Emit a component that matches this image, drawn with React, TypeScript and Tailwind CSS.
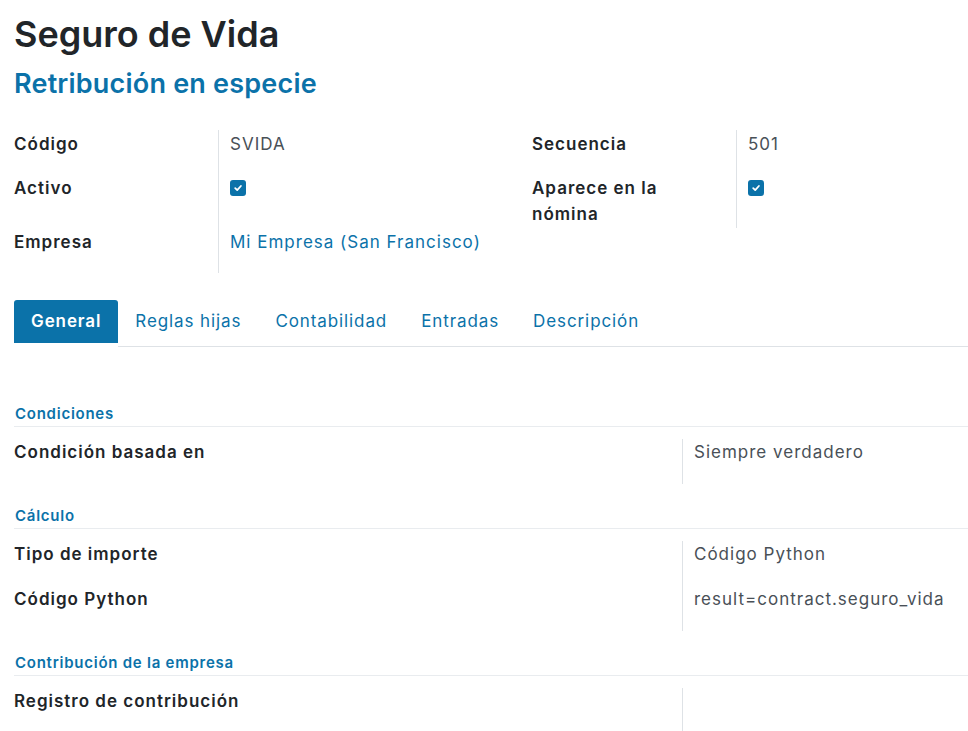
import React from "react";

const BLUE = "text-[#0b72a9]";

const Check = () => (
  <span className="inline-flex h-[16px] w-[16px] items-center justify-center rounded-[3px] bg-[#0b72a9]">
    <svg width="10" height="10" viewBox="0 0 10 10" fill="none">
      <path d="M2.2 5.2 4.2 7.1 7.9 3" stroke="white" strokeWidth="1.8" strokeLinecap="round" strokeLinejoin="round" />
    </svg>
  </span>
);

type Row = { label: React.ReactNode; value?: React.ReactNode; h: string };

const FieldGroup = ({ rows }: { rows: Row[] }) => (
  <div className="flex w-[518px] shrink-0">
    <div className="w-[204px] shrink-0">
      {rows.map((r, i) => (
        <div key={i} className={`${r.h} pt-[1px] text-[17px] font-semibold leading-[26px] tracking-[1px] text-[#212529]`}>
          {r.label}
        </div>
      ))}
    </div>
    <div className="flex-1 border-l border-[#dee2e6] pl-[11px]">
      {rows.map((r, i) => (
        <div key={i} className={`${r.h} pt-[1px] text-[17px] leading-[26px] tracking-[1px] text-[#495057]`}>
          {r.value}
        </div>
      ))}
    </div>
  </div>
);

const Section = ({ title, rows, first }: { title: string; rows: { label: string; value?: string }[]; first?: boolean }) => (
  <div className={first ? "mt-[57px]" : "mt-[22px]"}>
    <div className={`border-b border-[#e9ecef] pb-[2px] pl-[1px] text-[15px] font-semibold leading-[20px] tracking-[0.75px] ${BLUE}`}>
      {title}
    </div>
    <div className="mt-[12px] flex">
      <div className="w-[668px] shrink-0">
        {rows.map((r) => (
          <div key={r.label} className="h-[45px] text-[17px] font-semibold leading-[26px] tracking-[1px] text-[#212529]">
            {r.label}
          </div>
        ))}
      </div>
      <div className="flex-1 border-l border-[#dee2e6] pl-[11px]">
        {rows.map((r) => (
          <div key={r.label} className="h-[45px] text-[17px] leading-[26px] tracking-[1px] text-[#495057]">
            {r.value}
          </div>
        ))}
      </div>
    </div>
  </div>
);

const Box = () => (
  <span className="flex h-[26px] items-center">
    <Check />
  </span>
);

export default function App() {
  const tabs = ["Reglas hijas", "Contabilidad", "Entradas", "Descripción"];
  return (
    <div className="min-h-[731px] overflow-hidden bg-white pl-[14px] font-['Inter','Noto_Sans',sans-serif]">
      <h1 className="pt-[10px] text-[36px] font-semibold leading-[48px] text-[#212529]">Seguro de Vida</h1>
      <h2 className={`mt-[9px] text-[27px] font-semibold leading-[34px] tracking-[0.2px] ${BLUE}`}>Retribución en especie</h2>

      <div className="mt-[29px] flex items-start">
        <FieldGroup
          rows={[
            { label: "Código", value: "SVIDA", h: "h-[44px]" },
            { label: "Activo", value: <Box />, h: "h-[54px]" },
            { label: "Empresa", value: <span className={BLUE}>Mi Empresa (San Francisco)</span>, h: "h-[45px]" },
          ]}
        />
        <FieldGroup
          rows={[
            { label: "Secuencia", value: "501", h: "h-[44px]" },
            { label: <>Aparece en la<br />nómina</>, value: <Box />, h: "h-[54px]" },
          ]}
        />
      </div>

      <div className="mt-[27px] flex items-start">
        <div className="flex h-[43px] items-center rounded-t-[3px] bg-[#0b72a9] px-[17px] text-[17px] font-semibold tracking-[0.9px] text-white">
          General
        </div>
        <div className="flex h-[47px] flex-1 items-start border-b border-[#dee2e6]">
          {tabs.map((t) => (
            <div key={t} className={`flex h-[43px] items-center px-[17px] text-[17px] tracking-[0.9px] ${BLUE}`}>
              {t}
            </div>
          ))}
        </div>
      </div>

      <Section first title="Condiciones" rows={[{ label: "Condición basada en", value: "Siempre verdadero" }]} />
      <Section
        title="Cálculo"
        rows={[
          { label: "Tipo de importe", value: "Código Python" },
          { label: "Código Python", value: "result=contract.seguro_vida" },
        ]}
      />
      <Section title="Contribución de la empresa" rows={[{ label: "Registro de contribución" }]} />
    </div>
  );
}
